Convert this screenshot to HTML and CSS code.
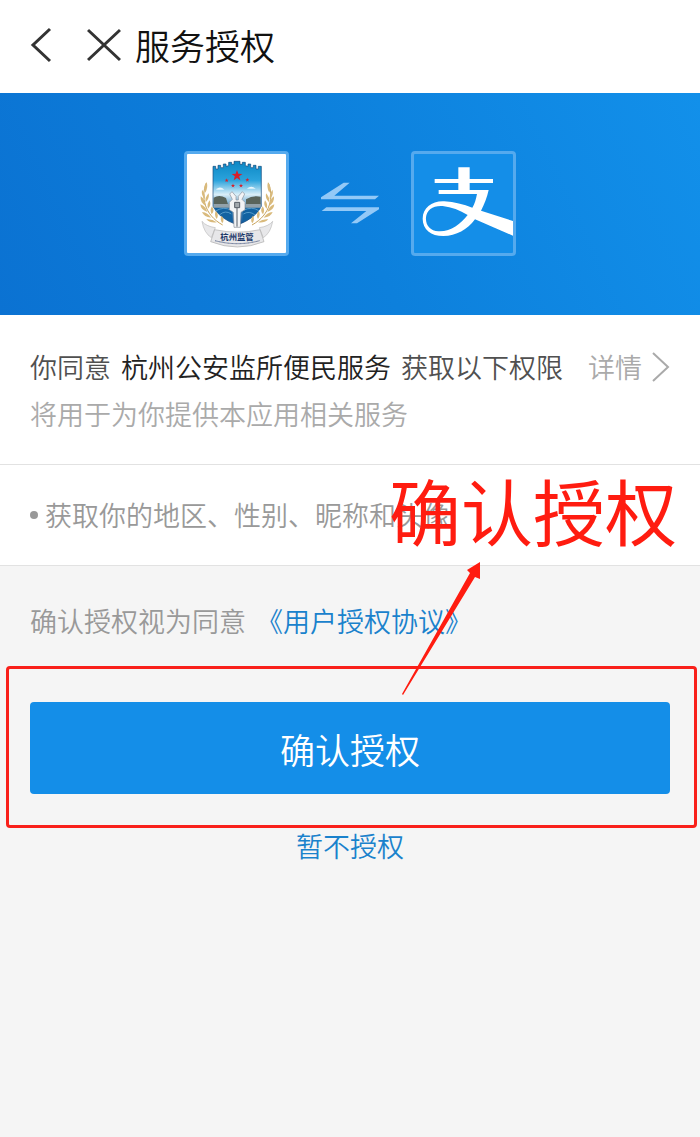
FILE: index.html
```html
<!DOCTYPE html>
<html lang="zh-CN">
<head>
    <meta charset="UTF-8">
    <meta name="viewport" content="width=device-width, initial-scale=1.0">
    <title>服务授权</title>
    <link rel="stylesheet" href="styles.css">
</head>
<body>
    <header class="navbar">
        <button type="button" class="nav-button back" aria-label="返回">
            <svg width="22" height="36" viewBox="0 0 22 36"><path d="M20 2L3 18L20 34"/></svg>
        </button>
        <button type="button" class="nav-button close" aria-label="关闭">
            <svg width="34" height="34" viewBox="0 0 34 34"><path d="M1 2L33 32M33 2L1 32"/></svg>
        </button>
        <h1 class="title">服务授权</h1>
    </header>

    <div class="banner">
        <div class="logo logo-app">
            <svg viewBox="33 33 297 297" role="img" aria-label="杭州监管">
                <defs>
                    <linearGradient id="sky" x1="0" y1="0" x2="0" y2="1">
                        <stop offset="0" stop-color="#0b87c4"/>
                        <stop offset="0.3" stop-color="#2ba3dc"/>
                        <stop offset="0.52" stop-color="#d9eef8"/>
                        <stop offset="0.7" stop-color="#5e9cc8"/>
                        <stop offset="1" stop-color="#0b4f94"/>
                    </linearGradient>
                    <path id="star" d="M0-10L2.4-3.2L9.5-3.1L3.8 1.2L5.9 8.1L0 4L-5.9 8.1L-3.8 1.2L-9.5-3.1L-2.4-3.2Z"/>
                    <g id="wheat">
                        <path d="M91 120C74 160 84 215 140 246" fill="none" stroke="#c9a45c" stroke-width="3"/>
                        <g fill="#d9ba7c">
                            <path d="M92 117Q80 133 88 149Q97 134 92 117Z"/>
                            <path d="M78 140Q75 158 87 168Q88 151 78 140Z"/>
                            <path d="M74 160Q72 178 88 188Q88 170 74 160Z"/>
                            <path d="M73 184Q74 200 94 207Q90 191 73 184Z"/>
                            <path d="M78 207Q84 222 105 224Q96 209 78 207Z"/>
                            <path d="M91 229Q103 241 122 238Q108 227 91 229Z"/>
                            <path d="M98 151Q86 163 89 178Q101 167 98 151Z"/>
                            <path d="M101 172Q91 184 96 197Q107 187 101 172Z"/>
                            <path d="M108 190Q100 201 107 214Q117 204 108 190Z"/>
                            <path d="M120 204Q113 215 122 228Q130 217 120 204Z"/>
                            <path d="M137 218Q130 228 139 241Q147 230 137 218Z"/>
                        </g>
                    </g>
                </defs>
                <path d="M78 235Q90 250 118 254L106 284Q84 270 78 235ZM290 235Q278 250 250 254L262 284Q284 270 290 235Z" fill="#e8e8ea" stroke="#bbb" stroke-width="2"/>
                <path d="M111 70H119V78H126V67H134V74H142V63H150V70L158 68V58H167V64H174V55H192V64H199V58H208V68L216 70V63H224V74H232V67H240V78H247V70H256V190Q239 226 184 246Q128 226 111 190Z" fill="url(#sky)" stroke="#154779" stroke-width="2"/>
                <path d="M113 164Q130 154 150 165L156 184H113ZM210 169Q231 156 254 161V186H210Z" fill="#59645b"/>
                <path d="M113 183H160V195H113ZM208 183H254V195H208Z" fill="#93a2aa"/>
                <path d="M113 194H168V238Q126 220 113 192ZM200 194H254Q240 220 200 238Z" fill="#1262a1"/>
                <path d="M119 204Q144 189 166 202M130 216Q148 200 166 213M202 202Q228 189 248 203M202 213Q220 202 237 216" fill="none" stroke="#76b7dd" stroke-width="2"/>
                <path d="M121 138Q133 128 145 140H121ZM214 136Q226 126 239 137H214Z" fill="#eaf6fc"/>
                <g fill="#d81e2a">
                    <use href="#star" transform="translate(183 98) scale(1.7)"/>
                    <use href="#star" transform="translate(152 112) scale(.65)"/>
                    <use href="#star" transform="translate(214 111) scale(.65)"/>
                    <use href="#star" transform="translate(171 128) scale(.65)"/>
                    <use href="#star" transform="translate(195 128) scale(.65)"/>
                </g>
                <path d="M168 146L180 160V171H187V160L199 146L206 153L198 169L207 178V200L195 208L193 253H174L172 208L160 200V178L169 169L161 153Z" fill="#f3f4f6" stroke="#8a9098" stroke-width="2"/>
                <path d="M176 178H191V194H176ZM183 195V251" fill="#a3a9ae" stroke="#555c66" stroke-width="3"/>
                <use href="#wheat"/>
                <use href="#wheat" transform="matrix(-1 0 0 1 368 0)"/>
                <path d="M116 260Q184 275 252 260L264 296Q184 328 104 296Z" fill="#e7e7e9" stroke="#aaa" stroke-width="2"/>
                <text x="183" y="291" class="logo-name">杭州监管</text>
                <path d="M117 293Q184 311 251 293" fill="none" stroke="#4d5e85" stroke-width="3" stroke-dasharray="3 1"/>
            </svg>
        </div>
        <svg class="exchange" width="58" height="42" viewBox="0 0 174 126">
            <path d="M68 2H86L40 41H174L162 52H0V46ZM16 76H174V82L108 124H90L136 87H2Z"/>
        </svg>
        <div class="logo logo-alipay">
            <svg viewBox="324 36 297 297" role="img" aria-label="支付宝">
                <path fill-rule="evenodd" d="M457 76H491V111H561V123H491V144H548C543 166 535 187 525 206L621 237V281L507 232C484 263 451 282 412 282C375 282 350 262 350 230C350 197 379 176 415 178C446 180 472 187 499 197C506 186 510 172 513 156H398V144H457V123H386V111H457ZM485 219C461 205 437 195 410 192C381 190 362 204 360 226C358 250 373 266 397 268C434 270 463 247 485 219Z"/>
            </svg>
        </div>
    </div>

    <section class="card scope">
        <div class="scope-row">
            <p class="scope-text">
                <span>你同意</span>
                <span class="app-name">杭州公安监所便民服务</span>
                <span>获取以下权限</span>
            </p>
            <a href="#" class="detail-link">详情
                <svg width="18" height="30" viewBox="0 0 18 30"><path d="M1 1L16 15L1 29"/></svg>
            </a>
        </div>
        <p class="scope-note">将用于为你提供本应用相关服务</p>
    </section>

    <section class="card permissions">
        <ul class="permission-list">
            <li>获取你的地区、性别、昵称和头像</li>
        </ul>
        <!-- tutorial callout -->
        <span class="callout-text">确认授权</span>
        <svg class="callout-arrow" width="80" height="134" viewBox="0 0 80 134">
            <path d="M78 0L65 8L68 11L0 132L1 133L73 15L78 17Z"/>
        </svg>
    </section>

    <main class="actions">
        <p class="agreement">
            <span>确认授权视为同意</span>
            <a href="#">《用户授权协议》</a>
        </p>
        <div class="highlight">
            <button type="button" class="confirm-button">确认授权</button>
        </div>
        <button type="button" class="cancel-button">暂不授权</button>
    </main>
</body>
</html>
```

FILE: styles.css
```css
body {
    font-family: 'Noto Sans CJK SC', sans-serif;
    font-size: 27px;
    font-weight: 350;
    line-height: 47px;
    margin: 0;
    background-color: #f5f5f5;
    color: #999;
}

p,
ul,
h1 {
    margin: 0;
    padding: 0;
}

a {
    color: #1a82cc;
    text-decoration: none;
}

button {
    font: inherit;
    border: none;
    padding: 0;
    background: none;
    cursor: pointer;
}

svg {
    display: block;
}

/* top bar */
.navbar {
    display: flex;
    align-items: center;
    height: 93px;
    padding: 0 30px 4px;
    box-sizing: border-box;
    background-color: #fff;
}

.nav-button path {
    fill: none;
    stroke: #333;
    stroke-width: 3;
}

.close {
    margin: 0 14px 0 35px;
}

.title {
    font-size: 35px;
    font-weight: 350;
    color: #111;
}

/* banner */
.banner {
    display: flex;
    justify-content: center;
    align-items: center;
    gap: 32px;
    height: 222px;
    padding-bottom: 2px;
    box-sizing: border-box;
    background: linear-gradient(65deg, #0b72d2, #0d80dc 50%, #1290ea);
}

.logo {
    width: 99px;
    height: 99px;
    border: 3px solid #55aaee;
    border-radius: 4px;
}

.logo-app {
    background-color: #fff;
}

.logo-alipay {
    background-color: #148ee8;
}

.logo-alipay path {
    fill: #fff;
}

.logo-name {
    font-size: 25px;
    font-weight: 700;
    text-anchor: middle;
    fill: #1c3768;
}

.exchange path {
    fill: #93c9f7;
}

/* white blocks */
.card {
    background-color: #fff;
    border-bottom: 1px solid #e2e2e2;
}

.scope {
    padding: 28px 30px 27px;
}

.scope-row {
    display: flex;
    justify-content: space-between;
}

.scope-text {
    display: flex;
    gap: 10px;
    color: #505050;
}

.app-name {
    color: #222;
}

.detail-link {
    display: flex;
    align-items: center;
    gap: 10px;
    color: #aaa;
}

.detail-link path {
    fill: none;
    stroke: #aaa;
    stroke-width: 2;
}

.scope-note {
    color: #aaa;
}

.permissions {
    position: relative;
    padding: 26px 30px 27px;
}

.permission-list {
    list-style: none;
}

.permission-list li {
    display: flex;
    align-items: center;
    gap: 7px;
}

.permission-list li::before {
    content: "";
    width: 8px;
    height: 8px;
    border-radius: 50%;
    background-color: #999;
}

.callout-text {
    position: absolute;
    top: 8px;
    right: 23px;
    font-size: 72px;
    font-weight: 400;
    line-height: 72px;
    color: #ff1c10;
}

.callout-arrow {
    position: absolute;
    top: 97px;
    right: 218px;
    fill: #ff1c10;
}

/* actions */
.agreement {
    display: flex;
    gap: 10px;
    padding: 31px 30px 22px;
}

.highlight {
    margin: 0 3px 0 6px;
    padding: 33px 24px 31px 21px;
    border: 3px solid #f9201a;
    border-radius: 4px;
}

.confirm-button {
    display: block;
    width: 100%;
    height: 92px;
    border-radius: 4px;
    background-color: #148ee8;
    color: #fff;
    font-size: 35px;
}

.cancel-button {
    display: block;
    margin: 0 auto;
    line-height: 35px;
    color: #1a82cc;
}
```
